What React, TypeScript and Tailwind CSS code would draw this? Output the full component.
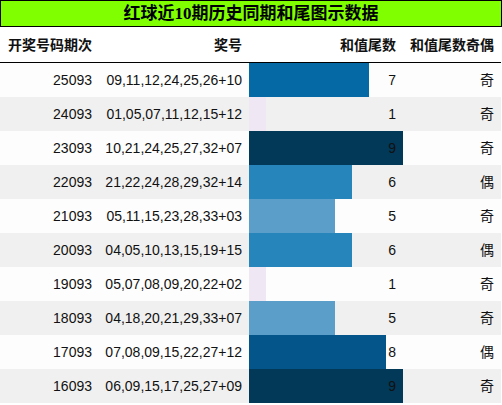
const rows = [
  { qi: '25093', hao: '09,11,12,24,25,26+10', wei: 7, jo: '奇' },
  { qi: '24093', hao: '01,05,07,11,12,15+12', wei: 1, jo: '奇' },
  { qi: '23093', hao: '10,21,24,25,27,32+07', wei: 9, jo: '奇' },
  { qi: '22093', hao: '21,22,24,28,29,32+14', wei: 6, jo: '偶' },
  { qi: '21093', hao: '05,11,15,23,28,33+03', wei: 5, jo: '奇' },
  { qi: '20093', hao: '04,05,10,13,15,19+15', wei: 6, jo: '偶' },
  { qi: '19093', hao: '05,07,08,09,20,22+02', wei: 1, jo: '奇' },
  { qi: '18093', hao: '04,18,20,21,29,33+07', wei: 5, jo: '奇' },
  { qi: '17093', hao: '07,08,09,15,22,27+12', wei: 8, jo: '偶' },
  { qi: '16093', hao: '06,09,15,17,25,27+09', wei: 9, jo: '奇' },
]

// PuBu-ish colours per tail value
const barColor: Record<number, string> = {
  1: '#efe7f3',
  5: '#5a9ec9',
  6: '#2685bb',
  7: '#0569a6',
  8: '#04558a',
  9: '#023858',
}

export default function App() {
  return (
    <div className="w-[502px] h-[405px] bg-white text-[#111]" style={{ fontFamily: '"Liberation Sans", "Noto Sans CJK SC", sans-serif' }}>
      <div
        className="h-[27px] bg-[#7fff00] border border-black flex items-center justify-center text-[17px] font-bold text-black"
        style={{ fontFamily: '"Liberation Serif", "Noto Sans CJK SC", serif' }}
      >
        红球近10期历史同期和尾图示数据
      </div>
      <div className="w-[501px]">
        <div className="flex h-[36px] items-center pt-[2px] border-b border-black text-[14px] font-bold">
          <div className="w-[99px] pr-[7px] text-right">开奖号码期次</div>
          <div className="w-[150px] pr-[7px] text-right">奖号</div>
          <div className="w-[154px] pr-[7px] text-right">和值尾数</div>
          <div className="w-[98px] pr-[7px] text-right">和值尾数奇偶</div>
        </div>
        {rows.map((r, i) => (
          <div key={r.qi} className={`flex h-[34px] items-center text-[14px] ${i % 2 ? 'bg-[#f0f0f0]' : 'bg-[#fdfdfd]'}`}>
            <div className="w-[99px] pr-[7px] text-right">{r.qi}</div>
            <div className="w-[150px] pr-[7px] text-right">{r.hao}</div>
            <div className="relative w-[154px] h-full flex items-center justify-end pr-[7px]">
              <div
                className="absolute left-0 top-0 h-full"
                style={{ width: `${(r.wei / 9) * 100}%`, backgroundColor: barColor[r.wei] }}
              />
              <span className="relative">{r.wei}</span>
            </div>
            <div className="w-[98px] pr-[7px] text-right">{r.jo}</div>
          </div>
        ))}
      </div>
    </div>
  )
}
